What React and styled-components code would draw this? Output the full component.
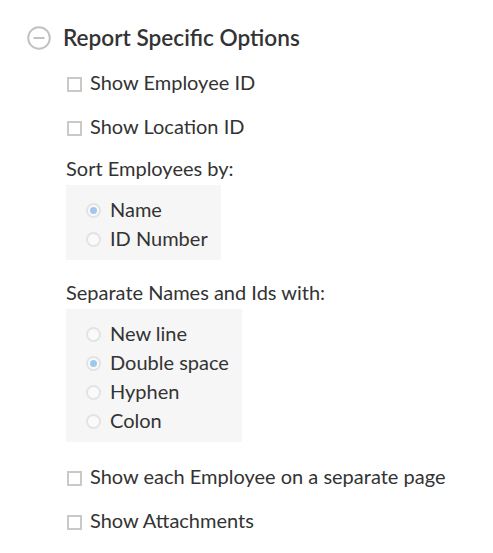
import React from "react";
import styled, { createGlobalStyle } from "styled-components";

const Global = createGlobalStyle`
  html, body { margin: 0; padding: 0; background: #fff; }
  body { font-family: Lato, "Open Sans", sans-serif; color: #333; }
`;

const Page = styled.div`
  padding: 24px 0 20px 27px;
`;

const Header = styled.div`
  display: flex;
  align-items: center;
  gap: 12px;
  height: 28px;
`;

const Title = styled.h2`
  margin: 0;
  font-size: 22.6px;
  font-weight: 600;
  line-height: 28px;
  color: #333;
`;

const Options = styled.div`
  display: flex;
  flex-direction: column;
  padding-left: 39px;
  margin-top: 16px;
`;

const CheckRow = styled.label`
  display: flex;
  align-items: center;
  gap: 8px;
  height: 29px;
  font-size: 20px;
  line-height: 29px;
  margin-top: ${(p) => p.$mt || 0}px;
  padding-left: 1px;
`;

const Box = styled.span`
  width: 11px;
  height: 11px;
  border: 2px solid #c9c9c9;
  background: #fff;
  margin-top: 4px;
  flex: none;
`;

const Label = styled.div`
  font-size: 20px;
  line-height: 29px;
  margin-top: ${(p) => p.$mt || 0}px;
`;

const RadioGroup = styled.div`
  background: #f6f6f6;
  width: ${(p) => p.$w}px;
  padding: 10px 0 7px 20px;
  margin-top: 2px;
  box-sizing: border-box;
`;

const RadioRow = styled.div`
  display: flex;
  align-items: center;
  gap: 9px;
  height: 29px;
  font-size: 20px;
  line-height: 29px;
`;

const Radio = styled.span`
  width: 11px;
  height: 11px;
  border-radius: 50%;
  border: 2px solid #e3e3e3;
  background: #fafafa;
  position: relative;
  margin-top: 2px;
  flex: none;
  &::after {
    content: "";
    display: ${(p) => (p.$on ? "block" : "none")};
    position: absolute;
    left: 2px;
    top: 2px;
    width: 7px;
    height: 7px;
    border-radius: 50%;
    background: #9fc9ec;
  }
`;

const MinusIcon = () => (
  <svg width="24" height="24" viewBox="0 0 24 24" aria-hidden="true">
    <circle cx="12" cy="12" r="10.8" fill="none" stroke="#c2c2c2" strokeWidth="2" />
    <line x1="6.5" y1="12" x2="17.5" y2="12" stroke="#c2c2c2" strokeWidth="2" />
  </svg>
);

export default function App() {
  return (
    <Page>
      <Global />
      <Header>
        <MinusIcon />
        <Title>Report Specific Options</Title>
      </Header>
      <Options>
        <CheckRow>
          <Box />
          Show Employee ID
        </CheckRow>
        <CheckRow $mt={15}>
          <Box />
          Show Location ID
        </CheckRow>
        <Label $mt={13}>Sort Employees by:</Label>
        <RadioGroup $w={155}>
          <RadioRow>
            <Radio $on />
            Name
          </RadioRow>
          <RadioRow>
            <Radio />
            ID Number
          </RadioRow>
        </RadioGroup>
        <Label $mt={18}>Separate Names and Ids with:</Label>
        <RadioGroup $w={176}>
          <RadioRow>
            <Radio />
            New line
          </RadioRow>
          <RadioRow>
            <Radio $on />
            Double space
          </RadioRow>
          <RadioRow>
            <Radio />
            Hyphen
          </RadioRow>
          <RadioRow>
            <Radio />
            Colon
          </RadioRow>
        </RadioGroup>
        <CheckRow $mt={20}>
          <Box />
          Show each Employee on a separate page
        </CheckRow>
        <CheckRow $mt={15}>
          <Box />
          Show Attachments
        </CheckRow>
      </Options>
    </Page>
  );
}
